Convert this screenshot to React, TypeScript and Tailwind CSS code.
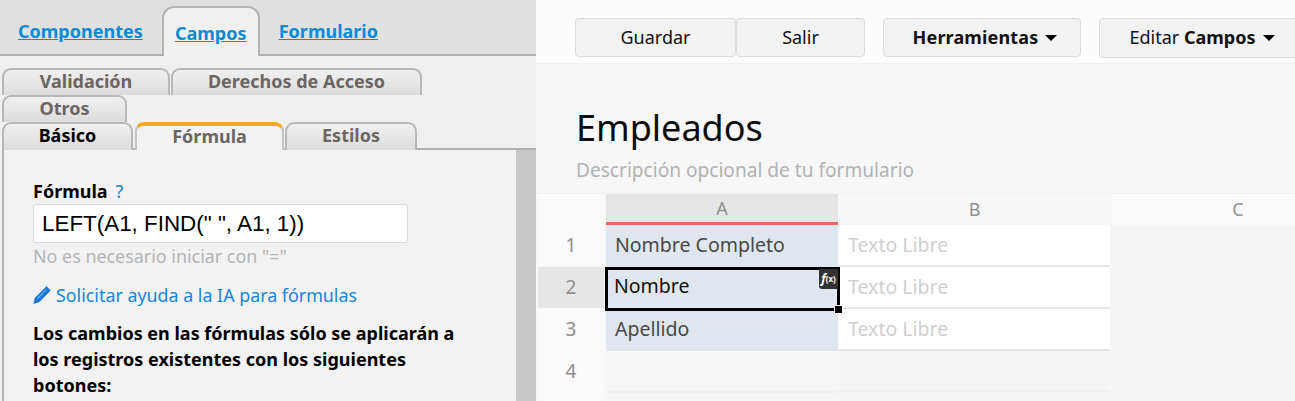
import React from "react";

const sans = "font-['Noto_Sans','Open_Sans',sans-serif]";

function SubTab({ w, label, dark, tall }: { w: string; label: string; dark?: boolean; tall?: boolean }) {
  return (
    <div
      className={`${w} ${tall ? "h-[28px] pb-[5px]" : "h-[27px] pb-[3px]"} shrink-0 rounded-t-[9px] border-2 border-b-0 border-[#b8b8b8] flex items-center justify-center text-[18px] font-bold leading-none bg-gradient-to-b from-[#f0f0f0] to-[#dcdcdc] ${
        dark ? "text-black" : "text-[#6b6663]"
      }`}
    >
      {label}
    </div>
  );
}

function TopTab({ label, active }: { label: string; active?: boolean }) {
  return (
    <div
      className={
        active
          ? "w-[98px] h-[50px] mt-[6px] rounded-t-[12px] border-2 border-b-0 border-[#b4b4b4] bg-[#f0f0f0] flex items-center justify-center pt-[1px] z-10"
          : "h-[50px] mt-[6px] flex items-center"
      }
    >
      <span className="text-[18px] font-bold underline text-[#0a8ad0] leading-none">{label}</span>
    </div>
  );
}

function Button({ w, children, grow, shift }: { w: string; children: React.ReactNode; grow?: boolean; shift?: boolean }) {
  return (
    <div
      className={`${w} ${grow ? "h-[40px]" : "h-[39px]"} ${shift ? "pl-[6px]" : ""} shrink-0 rounded-[4px] border border-[#dcdcdc] bg-[#f2f2f2] flex items-center justify-center pb-[2px] text-[18px] text-[#111] leading-none`}
    >
      {children}
    </div>
  );
}

function Caret() {
  return <span className="inline-block ml-[7px] mt-[2px] w-0 h-0 border-x-[6px] border-x-transparent border-t-[6px] border-t-black align-middle" />;
}

function RowHead({ n, active }: { n: number; active?: boolean }) {
  return (
    <div className={`h-[41px] mb-[1px] flex items-center justify-center text-[19px] text-[#8f8f8f] ${active ? "bg-[#e6e6e6]" : "bg-[#fafafa]"}`}>
      {n}
    </div>
  );
}

function CellA({ text }: { text?: string }) {
  return (
    <div className="h-[42px] bg-[#e0e6ef] flex items-center pl-[9px] pb-[2px] text-[19.5px] text-[#484848]">{text}</div>
  );
}

function CellB() {
  return (
    <div className="h-[42px] bg-white border-b-2 border-[#e4e4e4] flex items-center pl-[9px] pb-[1px] text-[19.5px] text-[#cfcfcf]">Texto Libre</div>
  );
}

export default function App() {
  return (
    <div className={`w-[1295px] h-[401px] overflow-hidden flex bg-[#f7f7f7] ${sans}`}>
      {/* Left panel */}
      <div className="w-[536px] h-[401px] shrink-0 flex flex-col bg-[#f0f0f0]">
        <div className="h-[56px] shrink-0 bg-[#e0e0e0] border-b-2 border-[#b0b0b0] flex items-start pl-[18px]">
          <TopTab label="Componentes" />
          <div className="ml-[19px]">
            <TopTab label="Campos" active />
          </div>
          <div className="ml-[19px]">
            <TopTab label="Formulario" />
          </div>
        </div>
        <div className="pt-[12px] pl-[2px] flex flex-col">
          <div className="flex gap-[1px]">
            <SubTab w="w-[168px]" label="Validación" />
            <SubTab w="w-[251px]" label="Derechos de Acceso" />
          </div>
          <div className="flex">
            <SubTab w="w-[125px]" label="Otros" />
          </div>
          <div className="flex gap-[1px] border-b-2 border-[#b0b0b0] h-[28px]">
            <SubTab w="w-[131px]" label="Básico" dark tall />
            <div className="relative z-10 flex h-[28px] ml-[1px]">
              <div className="w-[149px] h-[28px] rounded-t-[9px] border-x-2 border-[#c4c4c4] border-t-[4px] border-t-[#f5a623] bg-[#f2f2f2] flex items-center justify-center pb-[5px] text-[18px] font-bold leading-none text-[#6b6663]">
                Fórmula
              </div>
            </div>
            <SubTab w="w-[132px]" label="Estilos" tall />
          </div>
        </div>
        <div className="flex-1 flex min-h-0 ml-[2px] border-l-2 border-[#b4b4b4] bg-[#f2f2f2]">
          <div className="flex-1 pl-[29px] pt-[30px] min-w-0">
            <div className="flex items-center h-[22px] text-[18px] font-bold text-black leading-none">
              Fórmula <span className="ml-[8px] font-normal text-[#0a8ad0] text-[18px]">?</span>
            </div>
            <div className="mt-[2px] w-[375px] h-[39px] bg-white border border-[#d8d8d8] rounded-[3px] flex items-center pl-[8px] text-[22.4px] text-black font-['Liberation_Sans',sans-serif]">
              LEFT(A1, FIND(" ", A1, 1))
            </div>
            <div className="mt-[1px] text-[17.9px] leading-[24px] text-[#b4b4b4]">No es necesario iniciar con "="</div>
            <div className="mt-[15px] flex items-center text-[17.85px] leading-[24px] text-[#1a85d6]">
              <svg width="18" height="18" viewBox="0 0 18 18" className="mr-[5px] shrink-0" fill="#1478d4">
                <path d="M13.5 .6 17.4 4.5 6 16 .8 17.4 2 12Z" stroke="#1478d4" strokeWidth="0.6" strokeLinejoin="round" />
                <path d="M3.6 12.6 13 3.2 13.8 4 4.4 13.4Z" fill="#6fb2ea" />
              </svg>
              Solicitar ayuda a la IA para fórmulas
            </div>
            <div className="mt-[13px] w-[440px] text-[18px] leading-[26px] font-bold text-black">
              Los cambios en las fórmulas sólo se aplicarán a los registros existentes con los siguientes botones:
            </div>
          </div>
          <div className="w-[20px] shrink-0 bg-[#c8c8c8]" />
        </div>
      </div>

      {/* Right panel */}
      <div className="flex-1 min-w-0 flex flex-col bg-[#f7f7f7] overflow-hidden">
        <div className="h-[64px] shrink-0 bg-[#fcfcfc] border-b border-[#efefef] pl-[39px] pt-[18px] flex items-start">
          <Button w="w-[161px]">Guardar</Button>
          <Button w="w-[129px]">Salir</Button>
          <div className="ml-[18px]">
            <Button w="w-[198px]" shift>
              <span className="font-bold tracking-[0.15px]">Herramientas</span>
              <Caret />
            </Button>
          </div>
          <div className="ml-[18px]">
            <Button w="w-[200px]" grow shift>
              <span>Editar&nbsp;</span>
              <span className="font-bold">Campos</span>
              <Caret />
            </Button>
          </div>
        </div>
        <div className="pl-[40px] pt-[39px]">
          <div className="h-[50px] flex items-center text-[36px] leading-none text-[#0c0c0c]">Empleados</div>
          <div className="mt-[4px] h-[27px] flex items-center text-[19.1px] text-[#b2b2b2]">Descripción opcional de tu formulario</div>
        </div>
        <div className="mt-[9px] flex-1 border-t border-[#f0f0f0] pl-[2px] flex relative">
          <div className="w-[66px] shrink-0">
            <div className="h-[31px] bg-[#fafafa]" />
            <RowHead n={1} />
            <RowHead n={2} active />
            <RowHead n={3} />
            <RowHead n={4} />
            <div className="h-[12px] bg-[#fafafa]" />
          </div>
          <div className="w-[232px] ml-[2px] shrink-0 relative">
            <div className="h-[28px] bg-[#e6e6e6] flex items-center justify-center text-[18px] text-[#909090]">A</div>
            <div className="h-[3px] bg-[#f0626a]" />
            <CellA text="Nombre Completo" />
            <CellA />
            <CellA text="Apellido" />
            <div className="h-[41px] mt-[1px] bg-[#f6f6f6] border-b-2 border-[#f0f0f0]" />
            <div className="h-[12px] bg-[#f6f6f6]" />
            <div className="absolute left-[-1px] top-[73px] w-[235px] h-[44px] border-[3px] border-black flex items-center pl-[6px] pb-[6px] text-[19.5px] text-[#111]">
              Nombre
              <div className="absolute right-[-1px] top-[-1px] w-[19px] h-[20px] bg-[#333] rounded-bl-[3px] flex items-center justify-center font-bold text-white leading-none">
                <span className="italic text-[12px]">f</span>
                <span className="text-[8px]">(x)</span>
              </div>
              <div className="absolute right-[-5px] bottom-[-5px] w-[7px] h-[7px] bg-black outline outline-1 outline-white" />
            </div>
          </div>
          <div className="w-[271px] ml-[1px] shrink-0">
            <div className="h-[31px] bg-[#f7f7f7] flex items-center justify-center text-[18px] text-[#909090]">B</div>
            <CellB />
            <CellB />
            <CellB />
            <div className="h-[41px] bg-[#f5f5f5] border-b-2 border-[#f0f0f0]" />
            <div className="h-[12px] bg-[#f5f5f5]" />
          </div>
          <div className="w-[254px] ml-[1px] shrink-0">
            <div className="h-[31px] bg-[#fafafa] flex items-center justify-center text-[18px] text-[#909090]">C</div>
            <div className="h-[41px] mb-[1px] bg-[#f5f5f5]" />
            <div className="h-[41px] mb-[1px] bg-[#f5f5f5]" />
            <div className="h-[41px] mb-[1px] bg-[#f5f5f5]" />
            <div className="h-[41px] mb-[1px] bg-[#f5f5f5]" />
            <div className="h-[12px] bg-[#f5f5f5]" />
          </div>
        </div>
      </div>
    </div>
  );
}
